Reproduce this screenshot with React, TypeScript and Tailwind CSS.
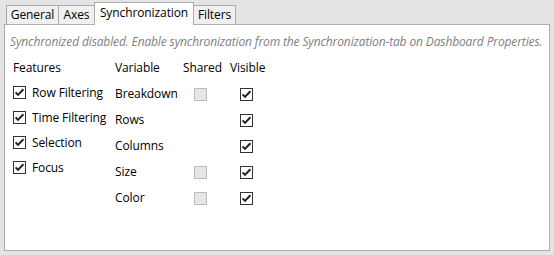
import React from "react"

const font = { fontFamily: '"Open Sans", "Liberation Sans", sans-serif' }

function Check({ checked = true, disabled = false }: { checked?: boolean; disabled?: boolean }) {
  return (
    <div
      className={
        disabled
          ? "w-[13px] h-[13px] border border-[#bcbcbc] bg-[#e6e6e6]"
          : "w-[13px] h-[13px] border border-[#333333] bg-white flex items-center justify-center"
      }
    >
      {checked && !disabled && (
        <svg width="11" height="11" viewBox="0 0 11 11">
          <path d="M1.6 5.4 L4 7.9 L9.4 2.2" fill="none" stroke="#212121" strokeWidth="2" />
        </svg>
      )}
    </div>
  )
}

const features = ["Row Filtering", "Time Filtering", "Selection", "Focus"]

const variables = [
  { name: "Breakdown", shared: true },
  { name: "Rows", shared: false },
  { name: "Columns", shared: false },
  { name: "Size", shared: true },
  { name: "Color", shared: true },
]

export default function App() {
  return (
    <div className="w-[554px] h-[255px] bg-[#e4e4e4] text-[12px] tracking-[-0.1px] text-black" style={font}>
      {/* tab strip */}
      <div className="h-[24px] flex items-end pl-[6px]">
        <div className="w-[53px] h-[19px] border border-b-0 border-[#acacac] bg-[#f0f0f0] flex items-center justify-center">
          General
        </div>
        <div className="-ml-px w-[37px] h-[19px] border border-b-0 border-[#acacac] bg-[#f0f0f0] flex items-center justify-center">
          Axes
        </div>
        <div className="-ml-px -mb-px relative z-10 w-[100px] h-[23px] border border-b-0 border-[#acacac] bg-white flex items-center justify-center pb-[2px]">
          Synchronization
        </div>
        <div className="-ml-px w-[43px] h-[19px] border border-b-0 border-[#acacac] bg-[#f0f0f0] flex items-center justify-center">
          Filters
        </div>
      </div>

      {/* panel */}
      <div className="mx-[4px] h-[227px] border border-[#acacac] bg-white pt-[9px]">
        <div className="pl-[5px] h-[16px] leading-[16px] italic tracking-[-0.13px] text-[#808080] whitespace-nowrap">
          Synchronized disabled. Enable synchronization from the Synchronization-tab on Dashboard Properties.
        </div>

        <div className="mt-[5px] pl-[8px] flex">
          <div className="w-[102px]">
            <div className="h-[25px] flex items-center">Features</div>
            {features.map((f) => (
              <div key={f} className="h-[25px] flex items-center">
                <Check />
                <span className="ml-[6px] whitespace-nowrap">{f}</span>
              </div>
            ))}
          </div>

          <div className="grid grid-cols-[68px_47px_40px] auto-rows-[26px]">
            <div className="h-[25px] flex items-center">Variable</div>
            <div className="h-[25px] flex items-center">Shared</div>
            <div className="h-[25px] flex items-center">Visible</div>
            {variables.map((v) => (
              <React.Fragment key={v.name}>
                <div className="flex items-center">{v.name}</div>
                <div className="flex items-center pl-[11px]">{v.shared && <Check disabled />}</div>
                <div className="flex items-center pl-[10px]">
                  <Check />
                </div>
              </React.Fragment>
            ))}
          </div>
        </div>
      </div>
    </div>
  )
}
